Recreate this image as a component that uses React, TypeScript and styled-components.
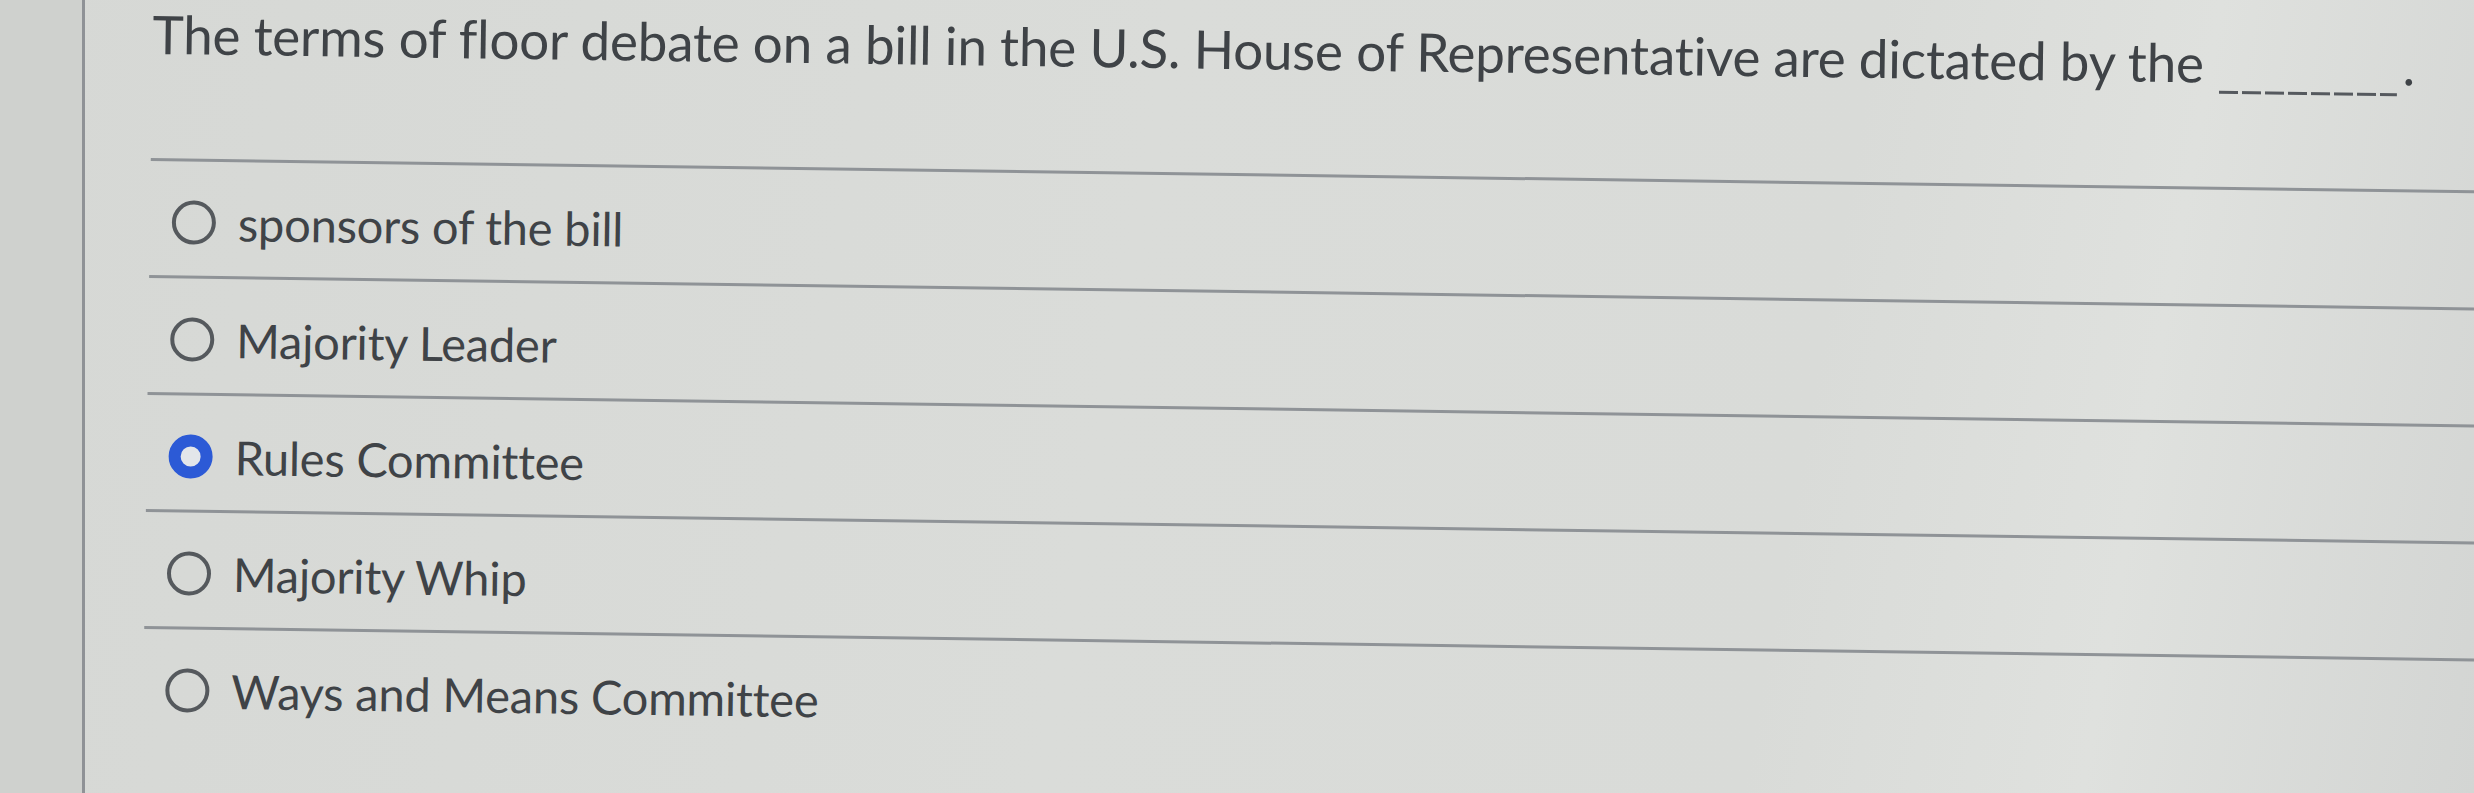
import React from 'react';
import styled, { createGlobalStyle } from 'styled-components';

const OPTIONS = [
    { label: 'sponsors of the bill', selected: false },
    { label: 'Majority Leader', selected: false },
    { label: 'Rules Committee', selected: true },
    { label: 'Majority Whip', selected: false },
    { label: 'Ways and Means Committee', selected: false },
];

const GlobalStyle = createGlobalStyle`
    html, body {
        margin: 0;
        padding: 0;
        background: #d7d9d6;
    }
    body {
        font-family: Lato, 'Open Sans', sans-serif;
    }
`;

const Screen = styled.div`
    width: 2474px;
    height: 793px;
    display: flex;
    overflow: hidden;
    background: linear-gradient(100deg, #d6d8d5 0%, #dadcd9 45%, #d9dbd8 72%, #dfe1de 85%, #d3d5d3 100%);
`;

const Gutter = styled.div`
    width: 82px;
    flex-shrink: 0;
    background: #cfd1ce;
    border-right: 3px solid #8f9296;
`;

const Panel = styled.main`
    flex: 1;
    padding: 1px 0 0 68px;
    transform: rotate(0.8deg);
    transform-origin: 0 0;
    color: #3f4347;
`;

const Question = styled.p`
    margin: 0;
    font-size: 53px;
    line-height: 1.2;
    white-space: nowrap;
    letter-spacing: -0.2px;
`;

const Blank = styled.span`
    display: inline-block;
    width: 178px;
    height: 3px;
    margin: 0 5px 0 16px;
    vertical-align: -11px;
    background: repeating-linear-gradient(90deg, #55595e 0 19px, transparent 19px 23px);
`;

const OptionList = styled.ul`
    list-style: none;
    margin: 92px 0 0 0;
    padding: 0;
    width: 2500px;
`;

const OptionRow = styled.li`
    display: flex;
    align-items: center;
    gap: 22px;
    height: 117px;
    box-sizing: border-box;
    padding: 9px 0 0 22px;
    border-top: 3px solid #8f9397;
    font-size: 47px;
`;

const Radio = styled.span<{ $selected: boolean }>`
    width: 44px;
    height: 44px;
    flex-shrink: 0;
    box-sizing: border-box;
    border-radius: 50%;
    border: ${(p) => (p.$selected ? '12px solid #2c5ad6' : '4px solid #55595d')};
    background: ${(p) => (p.$selected ? '#e3e6ea' : 'transparent')};
`;

const Label = styled.span`
    white-space: nowrap;
    letter-spacing: -0.2px;
`;

const App = () => {
    return (
        <Screen>
            <GlobalStyle />
            <Gutter />
            <Panel>
                <Question>
                    The terms of floor debate on a bill in the U.S. House of Representative are dictated by the
                    <Blank />.
                </Question>
                <OptionList>
                    {OPTIONS.map((item) => (
                        <OptionRow key={item.label}>
                            <Radio $selected={item.selected} />
                            <Label>{item.label}</Label>
                        </OptionRow>
                    ))}
                </OptionList>
            </Panel>
        </Screen>
    );
};

export default App;
